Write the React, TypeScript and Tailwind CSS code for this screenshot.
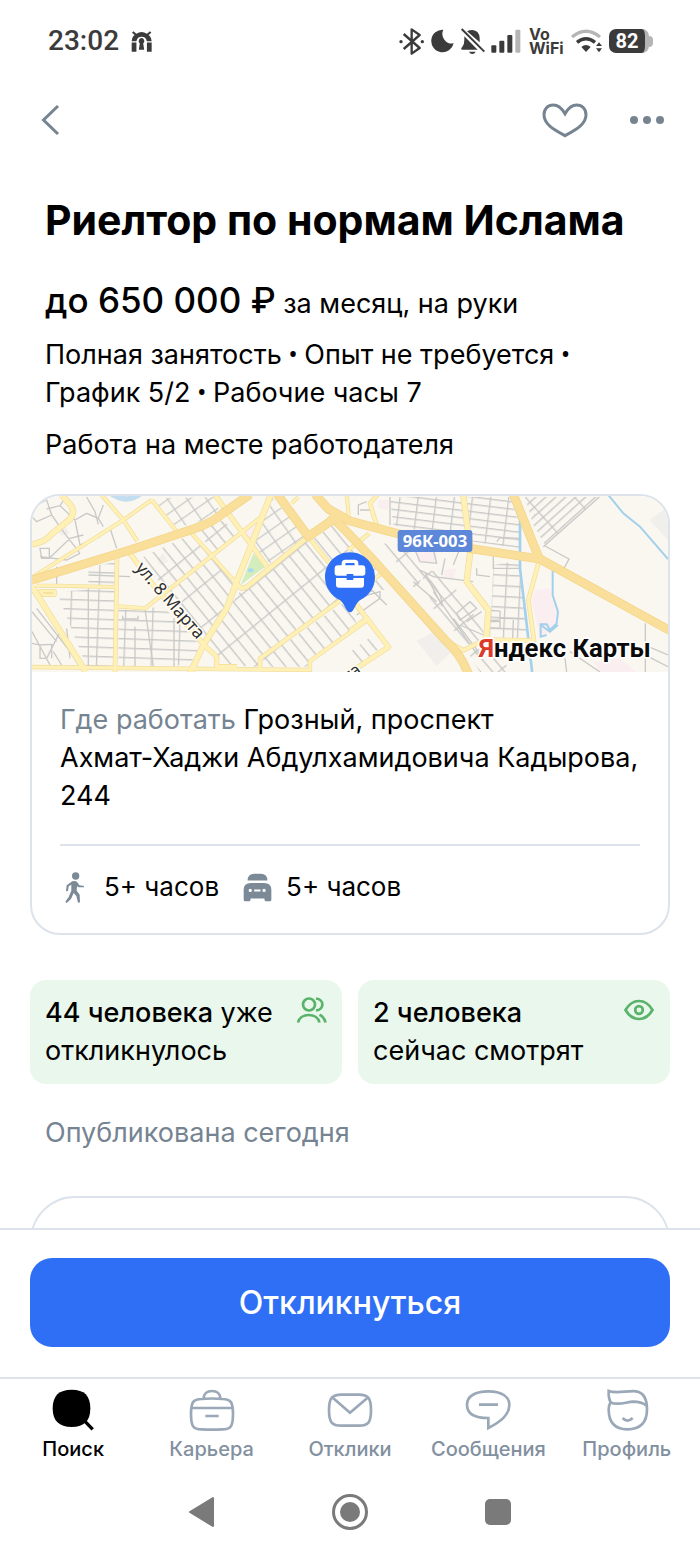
import type { ReactNode } from "react";

type MinorRoad = { d: string; w: number };

const sideStreets: { id: string; w: number; h: number; angle: number }[] = [
  { id: "blocks-west", w: 82, h: 28, angle: 2 },
  { id: "blocks-centre", w: 96, h: 31, angle: 51 },
  { id: "blocks-north", w: 48, h: 36, angle: -35 },
  { id: "blocks-northeast", w: 54, h: 22, angle: 7 },
  { id: "blocks-fine", w: 110, h: 20, angle: -42 },
  { id: "blocks-east", w: 42, h: 32, angle: 3 },
  { id: "blocks-rail", w: 90, h: 28, angle: 50 },
];

const blockAreas: { fill: string; points: string }[] = [
  { fill: "url(#blocks-west)", points: "110,320 285,310 285,545 200,545" },
  { fill: "url(#blocks-west)", points: "205,245 285,232 285,300 205,300" },
  { fill: "url(#blocks-west)", points: "295,375 430,365 540,480 510,540 295,545" },
  { fill: "url(#blocks-centre)", points: "370,215 520,145 645,300 610,375 550,475 440,330 400,260" },
  { fill: "url(#blocks-centre)", points: "625,370 660,320 860,165 990,330 725,515 715,545 595,540 560,480" },
  { fill: "url(#blocks-centre)", points: "730,520 990,340 1010,420 870,525 860,545 730,545" },
  { fill: "url(#blocks-centre)", points: "875,165 940,120 1060,240 1120,310 1000,330" },
  { fill: "url(#blocks-north)", points: "400,40 585,36 600,90 470,130" },
  { fill: "url(#blocks-centre)", points: "535,140 610,105 655,155 580,205" },
  { fill: "url(#blocks-north)", points: "755,36 860,155 750,235 700,185" },
  { fill: "url(#blocks-northeast)", points: "1110,36 1470,36 1500,120 1500,190 1360,170 1120,120" },
  { fill: "url(#blocks-fine)", points: "1515,36 1735,36 1575,180 1540,120" },
  { fill: "url(#blocks-east)", points: "1420,240 1500,225 1520,460 1410,465" },
  { fill: "url(#blocks-rail)", points: "1200,255 1270,260 1370,400 1400,460 1340,480 1240,370" },
  { fill: "url(#blocks-rail)", points: "1090,175 1180,190 1210,260 1190,320" },
  { fill: "url(#blocks-rail)", points: "1345,505 1400,480 1480,561 1380,561" },
  { fill: "url(#blocks-rail)", points: "990,500 1060,450 1090,480 1010,545" },
];

const minorRoads: MinorRoad[] = [
  { d: "M36 178Q75 172 95 147L150 103Q168 78 150 58L125 30", w: 15 },
  { d: "M36 278L310 105L395 45", w: 8 },
  { d: "M245 30L310 105L352 168", w: 9 },
  { d: "M395 45L467 135", w: 9 },
  { d: "M330 205L400 300L550 478L590 515V545H650", w: 12 },
  { d: "M36 305L197 560", w: 15 },
  { d: "M50 302H110L285 306M60 318H104V330H70Z", w: 8 },
  { d: "M291 212L285 561", w: 10 },
  { d: "M292 364L375 370L655 150L728 92", w: 9 },
  { d: "M515 145L652 298", w: 9 },
  { d: "M585 30L742 246", w: 12 },
  { d: "M752 30L690 190L650 290L620 370L550 480L510 566", w: 15 },
  { d: "M650 290Q656 318 680 306L865 155", w: 12 },
  { d: "M865 155L940 250", w: 10 },
  { d: "M36 546L870 555V528L1050 400", w: 9 },
  { d: "M720 555V520L990 325", w: 10 },
  { d: "M835 36L815 55M980 30L986 90", w: 8 },
  { d: "M1330 30L1340 110L1352 190L1340 290L1405 375L1398 475", w: 15 },
  { d: "M1555 235L1525 345L1542 466L1395 464L1330 496L1285 470", w: 10 },
  { d: "M1008 358L1106 486L985 566", w: 12 },
  { d: "M990 436L1042 398", w: 9 },
  { d: "M1072 30L1050 55L1070 122", w: 10 },
  { d: "M985 195L1048 145M1060 285L1085 265", w: 9 },
];

const majorRoads = [
  "M30 287L330 195L520 132Q580 112 610 84L690 28",
  "M772 28L865 155L937 105",
  "M885 28L925 72L990 108L1130 145L1360 192L1560 222L1950 437",
  "M930 90L985 145L1060 225L1280 470Q1320 505 1345 566",
  "M1480 28L1558 222",
];

function StreetMap() {
  return (
    <svg
      className="block h-[176px] w-full"
      viewBox="36 33 1908 528"
      preserveAspectRatio="xMidYMid slice"
      role="img"
      aria-label="Карта"
    >
      <defs>
        {sideStreets.map((s) => (
          <pattern
            key={s.id}
            id={s.id}
            width={s.w}
            height={s.h}
            patternUnits="userSpaceOnUse"
            patternTransform={`rotate(${s.angle})`}
          >
            <path d={`M0 2H${s.w}M2 0V${s.h}`} stroke="#c9c9c7" strokeWidth="4" />
          </pattern>
        ))}
      </defs>
      <rect x="30" y="30" width="1920" height="540" fill="#faf7f1" />

      <g fill="#f1efeb">
        <path d="M1190 467L1240 440L1300 495L1250 543Z" />
        <path d="M1888 105L1944 65V165Z" />
        <path d="M412 222L430 205L445 230L420 240Z" />
        <path d="M110 135L135 125L150 145L125 152Z" />
      </g>
      <g fill="#faeef1">
        <path d="M675 135L705 118L692 178Z" />
        <path d="M1185 195H1250V235L1195 230Z" />
        <path d="M1545 315L1590 310L1612 380L1605 430L1560 460L1535 345Z" />
        <path d="M1720 530L1800 520L1850 561H1740Z" />
        <path d="M1075 45H1105V75L1075 70Z" />
        <path d="M1275 255L1310 250L1300 285L1270 275Z" />
      </g>
      <path d="M700 205L736 245L662 300Z" fill="#d3edbd" />
      <ellipse cx="692" cy="256" rx="9" ry="6" fill="#a9d9ee" />

      {blockAreas.map((a) => (
        <polygon key={a.points} points={a.points} fill={a.fill} />
      ))}

      <g fill="none" stroke="#c9c9c7" strokeWidth="4">
        <path d="M36 68L80 45L95 90L50 110L36 95M80 72L120 62L165 105L200 85L235 100L250 125M95 90L130 140L180 205M165 105L180 180L240 155M60 190H88V220H65ZM88 220L150 160L190 150M200 36L225 80L235 118M250 60L235 100M120 62L135 40M270 130L290 190M180 205L140 225L60 215" />
        <path d="M36 380L110 470M50 370L150 500L185 555M70 345L120 440L80 520H60V480L36 475M55 480L95 478V520M100 500L125 540M36 440L90 540M140 430L150 520" />
        <path d="M110 245V300M205 270L330 275M308 392V402H354V392M375 372L400 545M345 425V545M462 400V545M205 310V545" />
        <path d="M1200 255L1240 275L1360 290M1220 275Q1270 330 1265 360L1215 265M1275 220L1265 270M1300 240L1320 190M1110 36V120M1185 195L1200 230L1250 235L1240 195M1370 250V270L1410 275M1420 200V250H1500M1430 170L1440 158L1500 160M1395 375L1440 378V405L1400 407M1440 400H1510M1410 410H1440V430H1405M1480 405L1478 460" />
        <path d="M1310 385L1350 350L1370 370L1320 405ZM1340 410L1385 380M1320 420L1390 450M1300 400L1390 520M1240 320L1380 520M1180 290L1250 350" />
        <path d="M1570 185L1738 36M1575 183L1647 222L1632 250M1876 561V415M1885 485L1944 510M1885 515L1944 545M1640 561L1635 520M1650 500L1740 561M990 345L1080 320V340L1010 390M1050 310L1100 360M1020 75H1060M1015 90V60L1040 50" />
      </g>

      <g fill="none" stroke="#a3d1ec" strokeWidth="6">
        <path d="M1473 28L1500 105V250L1518 400L1537 566" strokeWidth="8" />
        <path d="M1765 30L1810 85L1860 125L1944 222M1598 250V330L1614 380L1610 415L1590 435L1580 418H1562V455L1580 450M1562 420L1590 440L1614 420" />
      </g>
      <path d="M270 30Q320 65 365 30L350 30Q320 42 285 30Z" fill="#c2def0" stroke="#c2def0" strokeWidth="5" />

      <g fill="none" stroke="#f0dc9d" strokeLinejoin="round">
        {minorRoads.map((r) => (
          <path key={r.d} d={r.d} strokeWidth={r.w + 4} />
        ))}
      </g>
      <g fill="none" stroke="#fff1b5" strokeLinejoin="round">
        {minorRoads.map((r) => (
          <path key={r.d} d={r.d} strokeWidth={r.w} />
        ))}
      </g>
      <g fill="none" strokeLinejoin="round">
        {majorRoads.map((d) => (
          <path key={d} d={d} stroke="#f3d68a" strokeWidth="27" />
        ))}
        {majorRoads.map((d) => (
          <path key={d + "-in"} d={d} stroke="#fadf9b" strokeWidth="22" />
        ))}
      </g>

      <g className="font-['Noto_Sans',sans-serif]" stroke="#fffdf7" strokeLinejoin="round" paintOrder="stroke">
        <text transform="translate(344 250) rotate(49)" fontSize="52" fill="#2e2e2e" strokeWidth="9">
          ул. 8 Марта
        </text>
        <text transform="translate(984 592) rotate(-35)" fontSize="51" fill="#2e2e2e" strokeWidth="9">
          та
        </text>
      </g>
      <rect x="1133" y="135" width="224" height="66" rx="9" fill="#5d87d8" />
      <text
        x="1245"
        y="187"
        textAnchor="middle"
        fontSize="50"
        fontWeight="700"
        fill="#fff"
        className="font-['Noto_Sans',sans-serif]"
      >
        96К-003
      </text>

      <path
        d="M990 202C948 202 915 235 915 277C915 309 934 333 959 345C969 350 975 368 982 377Q990 386 998 377C1005 368 1011 350 1021 345C1046 333 1065 309 1065 277C1065 235 1032 202 990 202Z"
        fill="#2f6ff6"
      />
      <g fill="#fff">
        <path
          fillRule="evenodd"
          d="M965 241V235Q965 224 976 224H1004Q1015 224 1015 235V241H1026Q1036 241 1036 251V264Q1036 272 1028 272H1000V267H980V272H952Q944 272 944 264V251Q944 241 954 241ZM976 241H1004V237Q1004 234 1001 234H979Q976 234 976 237Z"
        />
        <path d="M948 279H980V285H1000V279H1032V299Q1032 308 1023 308H957Q948 308 948 299Z" />
      </g>

      <text
        x="1376"
        y="516"
        fontSize="77"
        fontWeight="700"
        stroke="#fff"
        strokeWidth="10"
        strokeLinejoin="round"
        paintOrder="stroke"
        fill="#0a0a0a"
        className="font-['Roboto',sans-serif]"
      >
        <tspan fill="#dc3b2b">Я</tspan>ндекс Карты
      </text>
    </svg>
  );
}

function StatusBar() {
  return (
    <div className="flex h-20 shrink-0 items-center justify-between pt-[2px] pr-[47px] pl-12 text-[#3b3b3b]">
      <div className="flex items-center gap-3">
        <span className="font-['Roboto',sans-serif] text-[28px] leading-8 font-medium">23:02</span>
        <svg width="21" height="21" viewBox="396 62 62 62" fill="currentColor" aria-hidden="true">
          <path d="M398 92Q400 77 407 74L399 67L403 63L412 70Q427 60 443 70L452 63L456 67L448 74Q455 78 457 92H443Q440 79 427 79Q415 79 412 92Z" />
          <path d="M398 96H412V123H398ZM443 96H457V123H443Z" />
          <path d="M427 83A9 9 0 0 1 432 99L435 117H419L422 99A9 9 0 0 1 427 83Z" />
        </svg>
      </div>
      <div className="flex items-center gap-[6px]">
        <svg width="25" height="27" viewBox="58 50 75 81" fill="none" stroke="currentColor" strokeWidth="7" aria-hidden="true">
          <path d="M72 68L120 110L96 127V54L120 71L72 113" strokeLinejoin="round" />
          <g fill="currentColor" stroke="none">
            <circle cx="64" cy="91" r="5" />
            <circle cx="128" cy="91" r="5" />
          </g>
        </svg>
        <svg width="24" height="24" viewBox="151 55 72 72" fill="currentColor" aria-hidden="true">
          <path d="M191 57A34 34 0 1 0 222 98A29 29 0 0 1 191 57Z" />
        </svg>
        <svg width="25" height="27" viewBox="241 48 75 81" fill="currentColor" aria-hidden="true">
          <path d="M262 58Q269 54 278 54Q299 56 300 78V91ZM254 73L294 113H246Q242 108 248 104Q254 98 254 84ZM268 119H288Q285 126 278 126Q271 126 268 119Z" />
          <path d="M246 51L314 119" stroke="currentColor" strokeWidth="6" />
        </svg>
        <svg width="30" height="24" viewBox="335 54 90 72" fill="currentColor" aria-hidden="true">
          <rect x="336" y="103" width="15" height="22" rx="3" />
          <rect x="360" y="89" width="15" height="36" rx="3" />
          <rect x="384" y="72" width="15" height="53" rx="3" />
          <rect x="408" y="56" width="15" height="69" rx="3" fill="#b5b5b5" />
        </svg>
        <span className="flex w-[38px] flex-col pl-[2px] text-[16px] leading-[14px] font-bold">
          <span>Vo</span>
          <span>WiFi</span>
        </span>
        <svg width="32" height="24" viewBox="577 56 96 72" fill="none" aria-hidden="true">
          <path d="M580 80Q622 46 664 80" stroke="#b5b5b5" strokeWidth="10" />
          <path d="M595 96Q622 74 649 96" stroke="currentColor" strokeWidth="10" />
          <path d="M608 110Q622 98 636 110L622 125ZM652 107L661 96L670 107ZM652 114H670L661 126Z" fill="currentColor" />
        </svg>
        <div className="flex items-center">
          <span className="flex h-6 w-10 items-center justify-center rounded-[7px] border-r-[4px] border-[#b5b5b5] bg-[#3b3b3b] font-['Roboto',sans-serif] text-[20px] leading-6 font-bold text-white">
            82
          </span>
          <span className="h-[11px] w-1 rounded-r-sm bg-[#b5b5b5]" />
        </div>
      </div>
    </div>
  );
}

function Header() {
  return (
    <header className="flex h-20 shrink-0 items-center justify-between pr-[34px] pl-[39px] text-[#768492]">
      <button type="button" aria-label="Назад" className="p-0">
        <svg width="22" height="32" viewBox="0 0 22 32" fill="none" stroke="currentColor" strokeWidth="3">
          <path d="M19 2L4.500 16L19 30" />
        </svg>
      </button>
      <div className="flex items-center gap-[38px]">
        <button type="button" aria-label="В избранное">
          <svg width="50" height="38" viewBox="479 273 150 114" fill="none" stroke="currentColor" strokeWidth="9">
            <path d="M554 311C544 294 534 285 519 285C502 285 491 297 491 314C491 344 524 360 554 377C584 360 617 344 617 314C617 297 606 285 589 285C574 285 564 294 554 311Z" />
          </svg>
        </button>
        <button type="button" aria-label="Ещё">
          <svg width="38" height="12" viewBox="0 0 38 12" fill="currentColor">
            <circle cx="6" cy="6" r="4" />
            <circle cx="19" cy="6" r="4" />
            <circle cx="32" cy="6" r="4" />
          </svg>
        </button>
      </div>
    </header>
  );
}

function WalkIcon() {
  return (
    <svg width="30" height="31" viewBox="120 64 90 93" fill="#7c8996" aria-hidden="true">
      <circle cx="167" cy="76" r="11" />
      <path d="M157 92Q170 89 174 98L178 104L192 106V110L176 110L171 107L170 120L179 132L180 155L174 156L169 136L161 127L153 145L140 157L136 153L146 139L154 120L154 102L146 107L144 121L138 122L140 104Z" />
    </svg>
  );
}

function CarIcon() {
  return (
    <svg width="29" height="29" viewBox="670 67 88 88" fill="#7c8996" aria-hidden="true">
      <path d="M684 90Q684 69 704 69H724Q744 69 744 90Z" />
      <path
        fillRule="evenodd"
        d="M672 148V118Q672 97 694 97H734Q756 97 756 118V148Q756 153 751 153H740Q735 153 735 144H693Q693 153 688 153H677Q672 153 672 148ZM687 120A5 5 0 1 0 697 120A5 5 0 1 0 687 120ZM704 117V123H723V117ZM729 120A5 5 0 1 0 739 120A5 5 0 1 0 729 120Z"
      />
    </svg>
  );
}

function Dot() {
  return <span className="font-['Roboto',sans-serif]"> • </span>;
}

function StatCard({ bold, rest, icon }: { bold: string; rest: ReactNode; icon: ReactNode }) {
  return (
    <div className="flex min-w-0 flex-1 items-start justify-between rounded-2xl bg-[#eaf7ec] px-[15px] py-[14px]">
      <p className="text-[27px] leading-[38px]">
        <span className="font-medium">{bold}</span>
        {rest}
      </p>
      {icon}
    </div>
  );
}

const tabs: { label: string; icon: ReactNode; active?: boolean }[] = [
  {
    label: "Поиск",
    active: true,
    icon: (
      <svg width="46" height="43" viewBox="150 57 138 129" aria-hidden="true">
        <path
          d="M215 59C253 59 271 77 271 115C271 153 253 171 215 171C177 171 158 153 158 115C158 77 177 59 215 59Z"
          fill="#000"
        />
        <path d="M250 149L278 178" stroke="#000" strokeWidth="10" />
      </svg>
    ),
  },
  {
    label: "Карьера",
    icon: (
      <svg width="46" height="43" viewBox="568 57 138 129" fill="none" stroke="#9aa8b8" strokeWidth="8" aria-hidden="true">
        <path d="M612 86C612 71 622 63 637 63C652 63 662 71 662 86M575 114H700M617 138H657" />
        <path d="M574 132C574 97 580 87 606 87Q637 84 668 87C694 87 700 97 700 132C700 168 694 178 668 178Q637 180 606 178C580 178 574 168 574 132Z" />
      </svg>
    ),
  },
  {
    label: "Отклики",
    icon: (
      <svg width="46" height="43" viewBox="985 57 138 129" fill="none" stroke="#9aa8b8" strokeWidth="8" aria-hidden="true">
        <path d="M991 121C991 83 1000 75 1028 74H1080C1109 75 1117 83 1117 121C1117 158 1109 167 1080 167H1028C1000 167 991 158 991 121Z" />
        <path d="M1003 84L1054 128L1106 84" />
      </svg>
    ),
  },
  {
    label: "Сообщения",
    icon: (
      <svg width="46" height="43" viewBox="348 57 138 129" fill="none" stroke="#9aa8b8" strokeWidth="8" aria-hidden="true">
        <path d="M418 144C376 144 354 130 354 104C354 78 380 64 418 64C458 64 481 80 481 104C481 135 455 155 418 174ZM390 104H447" />
      </svg>
    ),
  },
  {
    label: "Профиль",
    icon: (
      <svg width="46" height="43" viewBox="762 57 138 129" fill="none" stroke="#9aa8b8" strokeWidth="8" aria-hidden="true">
        <path d="M776 63C800 72 834 61 858 64C885 68 891 90 891 118C891 158 872 178 832 178C794 178 776 158 776 118Q776 105 782 97Q775 84 776 63Z" />
        <path d="M782 97C802 108 828 96 850 95Q874 95 890 107M818 144Q832 160 848 144" />
      </svg>
    ),
  },
];

export default function App() {
  return (
    <div className="flex h-screen flex-col bg-white font-['Inter',sans-serif] text-black">
      <StatusBar />
      <Header />

      <main className="min-h-0 flex-1 overflow-y-auto px-[30px] [scrollbar-width:none]">
        <section className="px-[15px] pt-[34px]">
          <h1 className="text-[41px] leading-[52px] font-bold">Риелтор по нормам Ислама</h1>
          <p className="mt-[30px] text-[27px] leading-[48px]">
            <span className="text-[35px] font-medium">до 650 000 ₽</span> за месяц, на руки
          </p>
          <p className="mt-2 text-[27px] leading-[38px]">
            Полная занятость
            <Dot />
            Опыт не требуется
            <Dot />
            График 5/2
            <Dot />
            Рабочие часы 7
          </p>
          <p className="mt-[14px] text-[27px] leading-[38px]">Работа на месте работодателя</p>
        </section>

        <section className="mt-[30px] overflow-hidden rounded-[30px] border-2 border-[#dce3eb]">
          <StreetMap />
          <div className="px-7 pt-[29px] pb-[27px]">
            <p className="text-[27px] leading-[38px]">
              <span className="text-[#768492]">Где работать</span> Грозный, проспект{" "}
              <span className="whitespace-nowrap">Ахмат-Хаджи</span> Абдулхамидовича Кадырова, 244
            </p>
            <hr className="mt-[29px] border-t-2 border-[#dce3eb]" />
            <div className="mt-[22px] flex items-center text-[26px] leading-[38px]">
              <WalkIcon />
              <span className="ml-[14px]">5+ часов</span>
              <span className="ml-6">
                <CarIcon />
              </span>
              <span className="ml-[14px]">5+ часов</span>
            </div>
          </div>
        </section>

        <div className="mt-[45px] flex gap-4">
          <StatCard
            bold="44 человека"
            rest=" уже откликнулось"
            icon={
              <svg className="mt-[2px] shrink-0" width="32" height="28" viewBox="0 0 32 28" fill="none" stroke="#59b36b" strokeWidth="2.700" aria-hidden="true">
                <circle cx="14" cy="8.500" r="6" />
                <path d="M3 26.500C5.500 16.500 22 16.500 24.500 26.500M21 2.500C29.500 3.500 29.500 13.500 21 14.500M24.500 18.800Q29 20.800 30.500 26.500" />
              </svg>
            }
          />
          <StatCard
            bold="2 человека"
            rest={
              <>
                <br />
                сейчас смотрят
              </>
            }
            icon={
              <svg className="mt-[5px] shrink-0" width="32" height="22" viewBox="0 0 32 22" fill="none" stroke="#59b36b" strokeWidth="2.700" aria-hidden="true">
                <path d="M2.500 11C6 5 10.500 2 16 2S26 5 29.500 11C26 17 21.500 20 16 20S6 17 2.500 11Z" />
                <circle cx="16" cy="11" r="3.800" />
              </svg>
            }
          />
        </div>

        <p className="mt-[30px] px-[15px] text-[27px] leading-[38px] text-[#768492]">Опубликована сегодня</p>

        <section className="mt-11 h-24 rounded-[45px] border-2 border-[#dce3eb]" />
      </main>

      <footer className="shrink-0">
        <div className="border-t-2 border-[#dce3eb] px-[30px] pt-7 pb-[30px]">
          <button
            type="button"
            className="h-[89px] w-full rounded-[22px] bg-[#2f6ff6] text-[32px] leading-10 font-medium text-white"
          >
            Откликнуться
          </button>
        </div>
        <nav className="grid grid-cols-5 border-t-2 border-[#dce3eb] px-1 pt-[10px] pb-[7px]">
          {tabs.map((tab) => (
            <a
              key={tab.label}
              href="#"
              className={
                "flex flex-col items-center gap-[5px] text-[20px] leading-6 font-medium " +
                (tab.active ? "text-black" : "text-[#8290a0]")
              }
            >
              {tab.icon}
              {tab.label}
            </a>
          ))}
        </nav>
        <div className="flex h-[88px] items-center justify-center gap-28">
          <button type="button" aria-label="Назад (система)">
            <svg width="36" height="36" viewBox="0 0 36 36" fill="#7a7a7a" stroke="#7a7a7a" strokeWidth="2" strokeLinejoin="round">
              <path d="M6 18L29 4V32Z" />
            </svg>
          </button>
          <button type="button" aria-label="Домой">
            <svg width="36" height="36" viewBox="0 0 36 36" fill="none">
              <circle cx="18" cy="18" r="16.500" stroke="#7a7a7a" strokeWidth="3" />
              <circle cx="18" cy="18" r="10" fill="#7a7a7a" />
            </svg>
          </button>
          <button type="button" aria-label="Последние приложения">
            <svg width="36" height="36" viewBox="0 0 36 36" fill="#7a7a7a">
              <rect x="5" y="5" width="26" height="26" rx="5" />
            </svg>
          </button>
        </div>
      </footer>
    </div>
  );
}
